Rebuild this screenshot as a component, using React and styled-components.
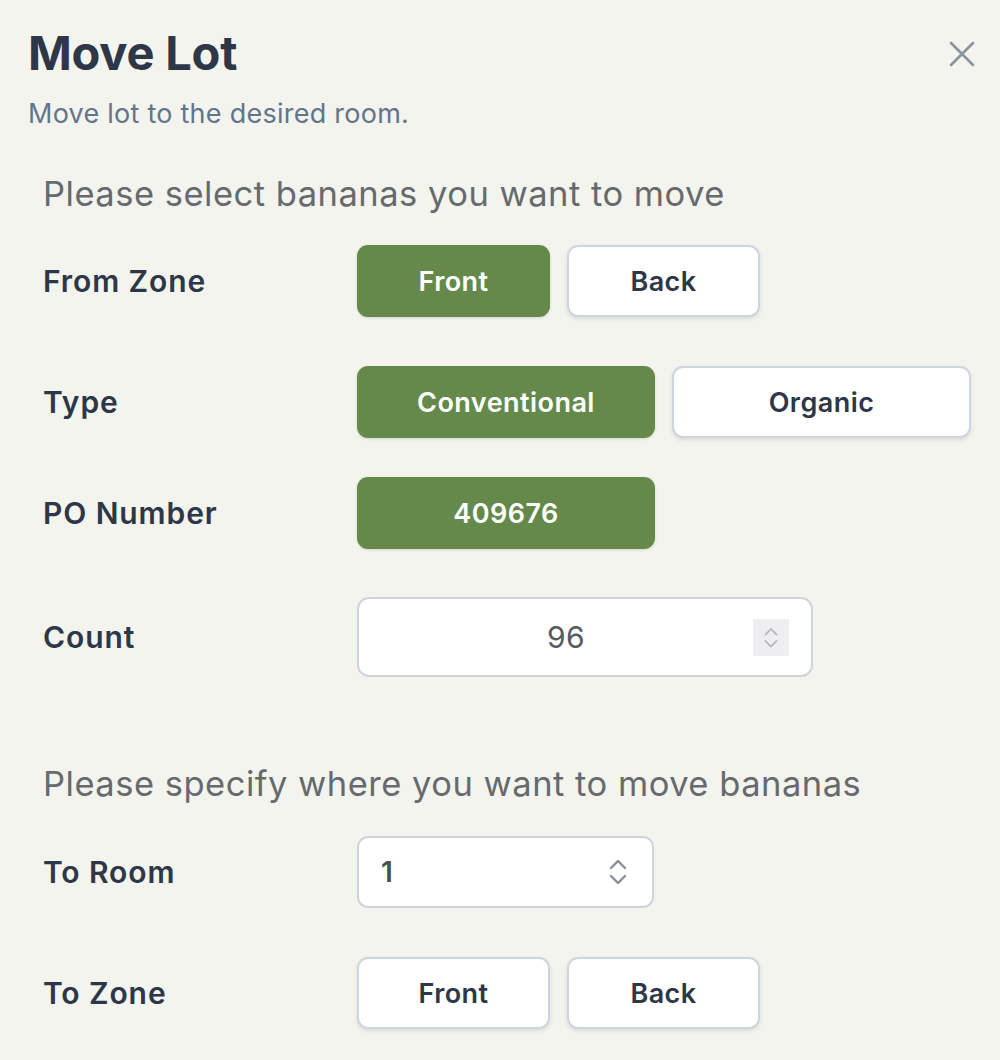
import React from "react";
import styled, { createGlobalStyle } from "styled-components";

const GlobalStyle = createGlobalStyle`
  html, body {
    margin: 0;
    padding: 0;
    background: #f3f4ed;
  }
  body {
    font-family: Inter, "Noto Sans", sans-serif;
    -webkit-font-smoothing: antialiased;
  }
  * { box-sizing: border-box; }
`;

const Panel = styled.div`
  width: 1000px;
  min-height: 1060px;
  background: #f3f4ed;
  padding: 24px 0 0 28px;
  position: relative;
`;

const Header = styled.header`
  display: flex;
  flex-direction: column;
`;

const Title = styled.h1`
  margin: 0;
  font-size: 47px;
  line-height: 58px;
  font-weight: 700;
  color: #2d3748;
  letter-spacing: -0.2px;
`;

const Subtitle = styled.p`
  margin: 16px 0 0;
  font-size: 27px;
  line-height: 32px;
  font-weight: 400;
  color: #64748b;
  letter-spacing: 0.25px;
`;

const CloseButton = styled.button`
  position: absolute;
  top: 36px;
  right: 20px;
  width: 36px;
  height: 36px;
  border: none;
  background: transparent;
  padding: 0;
  display: flex;
  align-items: center;
  justify-content: center;
  cursor: pointer;
`;

const Body = styled.div`
  padding-left: 15px;
`;

const SectionTitle = styled.h2`
  margin: ${(p) => p.$mt}px 0 0;
  font-size: 34.5px;
  line-height: 42px;
  font-weight: 400;
  color: #666a6e;
  letter-spacing: 0.5px;
`;

const Row = styled.div`
  display: grid;
  grid-template-columns: 314px 1fr;
  align-items: center;
  margin-top: ${(p) => p.$mt}px;
`;

const Label = styled.div`
  font-size: 30px;
  font-weight: 600;
  color: #2d3748;
  letter-spacing: 0.9px;
`;

const Choices = styled.div`
  display: flex;
  gap: 17px;
`;

const Choice = styled.button`
  width: ${(p) => p.$w}px;
  height: 72px;
  border-radius: 11px;
  font-family: Inter, "Noto Sans", sans-serif;
  font-size: 27px;
  font-weight: 600;
  letter-spacing: 0.45px;
  cursor: pointer;
  border: ${(p) => (p.$active ? "none" : "2px solid #cfd5de")};
  background: ${(p) => (p.$active ? "#64894b" : "#ffffff")};
  color: ${(p) => (p.$active ? "#ffffff" : "#2d3748")};
  box-shadow: ${(p) =>
    p.$active ? "0 1px 3px rgba(0,0,0,0.12)" : "0 2px 4px rgba(0,0,0,0.10)"};
`;

const NumberBox = styled.div`
  width: 456px;
  height: 80px;
  background: #ffffff;
  border: 2px solid #cfd4dc;
  border-radius: 12px;
  display: flex;
  align-items: center;
  padding-right: 38px;
  position: relative;
`;

const NumberValue = styled.div`
  flex: 1;
  text-align: center;
  font-size: 30px;
  color: #555a5f;
  letter-spacing: 0.4px;
`;

const Spinner = styled.div`
  position: absolute;
  right: 22px;
  top: 20px;
  width: 36px;
  height: 37px;
  background: #eeeef0;
  display: flex;
  align-items: center;
  justify-content: center;
`;

const SelectBox = styled.div`
  width: 297px;
  height: 72px;
  background: #ffffff;
  border: 2px solid #cfd4dc;
  border-radius: 11px;
  display: flex;
  align-items: center;
  justify-content: space-between;
  padding: 0 24px 0 22px;
`;

const SelectValue = styled.span`
  font-size: 28px;
  font-weight: 600;
  color: #4a4f55;
`;

const UpDown = ({ color, size, sw }) => (
  <svg width={size} height={size * 1.6} viewBox="0 0 20 32" fill="none">
    <path d="M3 12 L10 5 L17 12" stroke={color} strokeWidth={sw} strokeLinecap="round" strokeLinejoin="round" />
    <path d="M3 20 L10 27 L17 20" stroke={color} strokeWidth={sw} strokeLinecap="round" strokeLinejoin="round" />
  </svg>
);

export default function App() {
  return (
    <>
      <GlobalStyle />
      <Panel>
        <Header>
          <Title>Move Lot</Title>
          <Subtitle>Move lot to the desired room.</Subtitle>
        </Header>
        <CloseButton aria-label="Close">
          <svg width="26" height="26" viewBox="0 0 26 26" fill="none">
            <path d="M2 2 L24 24 M24 2 L2 24" stroke="#8b93a0" strokeWidth="2.6" strokeLinecap="round" />
          </svg>
        </CloseButton>
        <Body>
          <SectionTitle $mt={43}>Please select bananas you want to move</SectionTitle>
          <Row $mt={30}>
            <Label>From Zone</Label>
            <Choices>
              <Choice $active $w={193}>Front</Choice>
              <Choice $w={193}>Back</Choice>
            </Choices>
          </Row>
          <Row $mt={49}>
            <Label>Type</Label>
            <Choices>
              <Choice $active $w={298}>Conventional</Choice>
              <Choice $w={299}>Organic</Choice>
            </Choices>
          </Row>
          <Row $mt={39}>
            <Label>PO Number</Label>
            <Choices>
              <Choice $active $w={298}>409676</Choice>
            </Choices>
          </Row>
          <Row $mt={48}>
            <Label>Count</Label>
            <NumberBox>
              <NumberValue>96</NumberValue>
              <Spinner>
                <UpDown color="#b4b6ba" size={16} sw={2.2} />
              </Spinner>
            </NumberBox>
          </Row>
          <SectionTitle $mt={86}>Please specify where you want to move bananas</SectionTitle>
          <Row $mt={31}>
            <Label>To Room</Label>
            <SelectBox>
              <SelectValue>1</SelectValue>
              <UpDown color="#878f9c" size={20} sw={2.4} />
            </SelectBox>
          </Row>
          <Row $mt={49}>
            <Label>To Zone</Label>
            <Choices>
              <Choice $w={193}>Front</Choice>
              <Choice $w={193}>Back</Choice>
            </Choices>
          </Row>
        </Body>
      </Panel>
    </>
  );
}
